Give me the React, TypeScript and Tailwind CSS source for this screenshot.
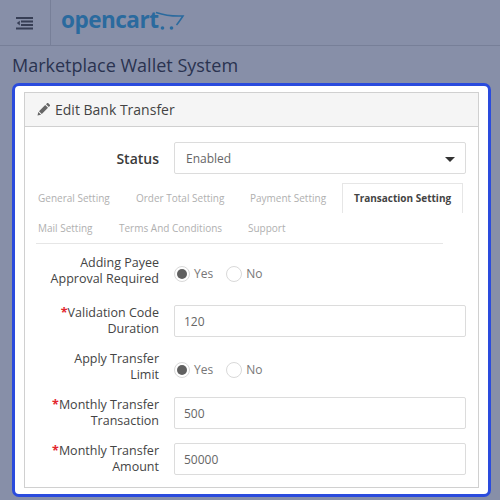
import React from "react";

const font = { sans: "font-['Open_Sans',sans-serif]" };

const Label = ({ text, required }: { text: string[]; required?: boolean }) => (
  <div className="mr-[15px] w-[123px] shrink-0 text-right text-[12.5px] leading-[16px] text-[#444444]">
    {text.map((line, i) => (
      <div key={line}>
        {required && i === 0 && <span className="font-bold text-[#e3262e]">*</span>}
        {line}
      </div>
    ))}
  </div>
);

const Radio = ({ checked, label }: { checked?: boolean; label: string }) => (
  <div className="flex items-center gap-[4px]">
    <span className="flex size-[16px] items-center justify-center rounded-full border border-[#d9d9d9] bg-white">
      {checked && <span className="size-[10px] rounded-full bg-[#606060]" />}
    </span>
    <span className="text-[12px] text-[#777777]">{label}</span>
  </div>
);

const RadioRow = ({ text, className }: { text: string[]; className: string }) => (
  <div className={`flex items-center ${className}`}>
    <Label text={text} />
    <div className="mt-[5px] flex gap-[13px]">
      <Radio checked label="Yes" />
      <Radio label="No" />
    </div>
  </div>
);

const InputRow = ({ text, value, className }: { text: string[]; value: string; className: string }) => (
  <div className={`flex items-start ${className}`}>
    <Label text={text} required />
    <div className="flex h-[32px] w-[292px] items-center rounded-[2px] border border-[#dcdcdc] pl-[9px] pt-[1px] text-[12px] text-[#666666]">
      {value}
    </div>
  </div>
);

export default function App() {
  return (
    <div className={`h-[500px] w-[500px] overflow-hidden bg-[#878fa8] ${font.sans}`}>
      {/* top bar */}
      <header className="flex h-[46px] border-b border-[#777f98]">
        <div className="flex w-[51px] items-center justify-center border-r border-[#777f98] pr-[1px] pt-[1px]">
          <svg width="17" height="13" viewBox="0 0 17 13" fill="#373e55">
            <rect x="0" y="0" width="17" height="2" />
            <rect x="5" y="3.500" width="12" height="2" />
            <rect x="5" y="7" width="12" height="2" />
            <rect x="0" y="10.500" width="17" height="2" />
            <path d="M3.800 3.800v4.600L0.800 6.100z" />
          </svg>
        </div>
        <div className="relative ml-[10px] flex h-[40px] items-center">
          <span className="text-[22.5px] font-bold leading-none tracking-[-0.5px] text-[#2a6a9e]">opencart</span>
          <svg className="absolute left-[94px] top-[11px]" width="30" height="20" viewBox="0 0 30 20" fill="none">
            <path d="M1 1.500c9 3 18 4 27 3.500-2 3-4 6-6.500 9" stroke="#2a6a9e" strokeWidth="1.500" />
            <circle cx="7.500" cy="17" r="1.800" fill="#2a6a9e" />
            <circle cx="16.500" cy="17" r="1.800" fill="#2a6a9e" />
          </svg>
        </div>
      </header>

      <h1 className="ml-[12px] mt-[6px] h-[31px] text-[18px] leading-[26px] text-[#2a3350]">Marketplace Wallet System</h1>

      {/* highlighted frame */}
      <div className="ml-[12px] h-[414px] w-[479px] rounded-[7px] border-[3px] border-[#2a4bdd] bg-white px-[9px] pt-[6px]">
        <div className="h-[396px] border border-[#d0d0d0]">
          <div className="flex h-[34px] items-center gap-[5px] border-b border-[#d0d0d0] bg-[#f5f5f5] pl-[12px] text-[14px] text-[#444444]">
            <svg width="13" height="13" viewBox="0 0 13 13" fill="#666666">
              <path d="M0.500 12.500l.8-3.600 2.800 2.800zM2 8.200L8.200 2l2.800 2.800-6.200 6.200zM9 1.200l1-1a1 1 0 0 1 1.300 0l1.500 1.500a1 1 0 0 1 0 1.300l-1 1z" />
            </svg>
            Edit Bank Transfer
          </div>

          <div className="px-[11px] pt-[15px]">
            <div className="flex items-center">
              <div className="mr-[15px] w-[123px] shrink-0 text-right text-[14px] font-semibold text-[#3a3a3a]">Status</div>
              <div className="flex h-[32px] w-[292px] items-center justify-between rounded-[2px] border border-[#dcdcdc] pl-[11px] pr-[10px] pt-[1px] text-[12px] text-[#666666]">
                Enabled
                <span className="mt-[1px] border-x-[5px] border-t-[5px] border-x-transparent border-t-[#333333]" />
              </div>
            </div>

            {/* tabs */}
            <div className="mt-[9px] w-[407px] border-b border-[#e6e6e6] text-[10px] text-[#b0b0b0]">
              <div className="flex h-[30px] items-center">
                <span className="ml-[2px] w-[98px] shrink-0">General Setting</span>
                <span className="w-[114px] shrink-0">Order Total Setting</span>
                <span className="w-[92px] shrink-0">Payment Setting</span>
                <span className="flex h-[30px] w-[121px] shrink-0 items-center justify-center border-x border-t border-[#e6e6e6] font-bold text-[#444444]">
                  Transaction Setting
                </span>
              </div>
              <div className="flex h-[30px] items-center">
                <span className="ml-[2px] w-[81px] shrink-0">Mail Setting</span>
                <span className="w-[129px] shrink-0">Terms And Conditions</span>
                <span>Support</span>
              </div>
            </div>

            <RadioRow className="mt-[11px]" text={["Adding Payee", "Approval Required"]} />
            <InputRow className="mt-[18px]" text={["Validation Code", "Duration"]} value="120" />
            <RadioRow className="mt-[14px]" text={["Apply Transfer", "Limit"]} />
            <InputRow className="mt-[14px]" text={["Monthly Transfer", "Transaction"]} value="500" />
            <InputRow className="mt-[14px]" text={["Monthly Transfer", "Amount"]} value="50000" />
          </div>
        </div>
      </div>
    </div>
  );
}
